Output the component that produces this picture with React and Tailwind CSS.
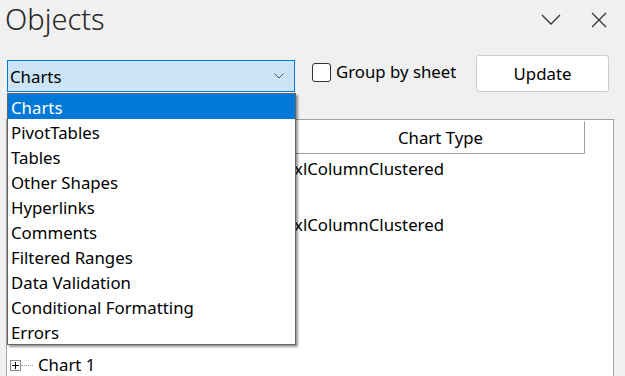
import { useState } from 'react';

const items = [
  'Charts',
  'PivotTables',
  'Tables',
  'Other Shapes',
  'Hyperlinks',
  'Comments',
  'Filtered Ranges',
  'Data Validation',
  'Conditional Formatting',
  'Errors',
];

// tree rows under the dropdown, 28px each (names hidden behind the list)
const rows = [
  { name: '', type: 'xlColumnClustered' },
  { name: '', type: '' },
  { name: '', type: 'xlColumnClustered' },
  { name: '', type: '' },
  { name: '', type: '' },
  { name: '', type: '' },
  { name: '', type: '' },
  { name: 'Chart 1', type: '', expander: true },
];

function Expander() {
  return (
    <div className="flex items-center">
      <div className="w-[11px] h-[11px] border border-[#8c8c8c] bg-white flex items-center justify-center">
        <svg width="7" height="7" viewBox="0 0 7 7">
          <path d="M0 3.5H7M3.5 0V7" stroke="#000" strokeWidth="1" />
        </svg>
      </div>
      <div className="w-[12px] border-t border-dotted border-[#a0a0a0]" />
    </div>
  );
}

function App() {
  const [selected] = useState('Charts');

  return (
    <div className="w-[625px] h-[376px] bg-[#f0f0f0] overflow-hidden relative font-['Noto_Sans',sans-serif] text-[16.8px] text-black">
      {/* title bar */}
      <div className="flex items-start justify-between h-[50px]">
        <h1 className="pl-[5px] text-[29px] leading-[38px] font-light text-[#262626]">Objects</h1>
        <div className="flex items-center gap-[30px] pt-[12px] pr-[18px]">
          <svg width="20" height="12" viewBox="0 0 20 12">
            <path d="M1 1L10 10L19 1" fill="none" stroke="#333" strokeWidth="1.3" />
          </svg>
          <svg width="16" height="16" viewBox="0 0 16 16">
            <path d="M1 1L15 15M15 1L1 15" fill="none" stroke="#333" strokeWidth="1.3" />
          </svg>
        </div>
      </div>

      {/* toolbar */}
      <div className="flex items-center mt-[5px] pl-[7px] h-[37px]">
        <div className="w-[288px] h-[32px] mt-[5px] border border-[#0078d7] bg-[#cce4f7] flex items-center justify-between pl-[2px] pr-[10px]">
          <span className="mt-[2px]">{selected}</span>
          <svg width="10" height="6" viewBox="0 0 10 6">
            <path d="M0.5 0.5L5 5L9.5 0.5" fill="none" stroke="#555" strokeWidth="1" />
          </svg>
        </div>
        <label className="flex items-center ml-[17px] gap-[5px] -mt-[3px]">
          <span className="w-[19px] h-[19px] border border-[#333] rounded-[3px] bg-white" />
          <span>Group by sheet</span>
        </label>
        <button className="ml-auto mr-[16px] w-[133px] h-[37px] bg-white border border-[#cccccc] rounded-[3px]">Update</button>
      </div>

      {/* tree list */}
      <div className="mt-[27px] ml-[6px] w-[608px] h-[260px] bg-white border-l border-t border-r border-[#a0a0a0] pt-[1px]">
        <div className="flex h-[33px]">
          <div className="w-[283px] border-r border-b border-[#a0a0a0]" />
          <div className="w-[295px] border border-t-[#ffffff] border-l-[#e5e5e5] border-r-[#a0a0a0] border-b-[#a0a0a0] flex items-center justify-center pl-[6px] pt-[1px]">
            Chart Type
          </div>
        </div>
        <div className="pt-[1px]">
          {rows.map((r, i) => (
            <div key={i} className="flex h-[28px] items-center">
              <div className="w-[283px] pl-[3px] flex items-center gap-[5px]">
                {r.expander && <Expander />}
                {r.name && <span>{r.name}</span>}
              </div>
              {r.type && <div className="pl-[4px]">{r.type}</div>}
            </div>
          ))}
        </div>
      </div>

      {/* dropdown list overlay */}
      <div className="absolute left-[7px] top-[93px] w-[289px] bg-white border border-[#646464] shadow-[2px_2px_2px_rgba(0,0,0,0.4)]">
        {items.map((it) => (
          <div
            key={it}
            className={
              it === selected
                ? 'h-[25px] leading-[27px] pl-[3px] bg-[#0078d7] text-white'
                : 'h-[25px] leading-[27px] pl-[3px]'
            }
          >
            {it}
          </div>
        ))}
      </div>
    </div>
  );
}

export default App;
